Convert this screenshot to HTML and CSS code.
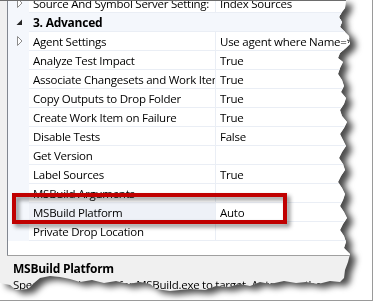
FILE: index.html
```html
<!DOCTYPE html>
<html>
<head>
<meta charset="utf-8">
<link rel="stylesheet" href="styles.css">
</head>
<body>
<div class="canvas">
  <div class="shot">
    <div class="paper">
      <div class="window">
        <div class="grid">
          <div class="row first">
            <div class="gutter"><svg class="arrow" width="6" height="10" viewBox="0 0 6 10"><polygon points="0.5,0.5 5,5 0.5,9.5" fill="#fff" stroke="#8c8c8c"/></svg></div>
            <div class="name">Source And Symbol Server Setting:</div>
            <div class="value">Index Sources</div>
          </div>
          <div class="row cat">
            <div class="gutter"><svg class="arrow" width="7" height="7" viewBox="0 0 7 7"><polygon points="6,0.5 6,6 0.5,6" fill="#262626"/></svg></div>
            <div class="name">3. Advanced</div>
          </div>
          <div class="row">
            <div class="gutter"><svg class="arrow" width="6" height="10" viewBox="0 0 6 10"><polygon points="0.5,0.5 5,5 0.5,9.5" fill="#fff" stroke="#8c8c8c"/></svg></div>
            <div class="name">Agent Settings</div>
            <div class="value">Use agent where Name=*</div>
          </div>
          <div class="row"><div class="gutter"></div><div class="name">Analyze Test Impact</div><div class="value">True</div></div>
          <div class="row"><div class="gutter"></div><div class="name">Associate Changesets and Work Items</div><div class="value">True</div></div>
          <div class="row"><div class="gutter"></div><div class="name">Copy Outputs to Drop Folder</div><div class="value">True</div></div>
          <div class="row"><div class="gutter"></div><div class="name">Create Work Item on Failure</div><div class="value">True</div></div>
          <div class="row"><div class="gutter"></div><div class="name">Disable Tests</div><div class="value">False</div></div>
          <div class="row"><div class="gutter"></div><div class="name">Get Version</div><div class="value"></div></div>
          <div class="row"><div class="gutter"></div><div class="name">Label Sources</div><div class="value">True</div></div>
          <div class="row"><div class="gutter"></div><div class="name">MSBuild Arguments</div><div class="value"></div></div>
          <div class="row"><div class="gutter"></div><div class="name selected">MSBuild Platform</div><div class="value">Auto</div></div>
          <div class="row"><div class="gutter"></div><div class="name">Private Drop Location</div><div class="value"></div></div>
          <div class="filler"></div>
        </div>
        <div class="desc">
          <div class="desc-title">MSBuild Platform</div>
          <div class="desc-text">Specify the platform for MSBuild.exe to target. Auto uses the</div>
        </div>
      </div>
    </div>
  </div>
  <div class="highlight"></div>
</div>
</body>
</html>
```
FILE: styles.css
```css
* { box-sizing: border-box; }
html, body { margin: 0; padding: 0; background: #fff; }
body {
  font-family: "Open Sans", "Noto Sans", sans-serif;
  font-size: 11.5px;
  letter-spacing: -0.25px;
  color: #000;
  width: 376px;
  height: 305px;
  overflow: hidden;
}
.canvas {
  position: relative;
  width: 373px;
  height: 301px;
  border-right: 1px solid #9a9a9a;
  border-bottom: 1px solid #9a9a9a;
  background: #fff;
  overflow: hidden;
}
.shot {
  width: 352px;
  height: 298px;
  filter: drop-shadow(6px 4px 3px rgba(0,0,0,0.7));
}
.paper {
  width: 352px;
  height: 298px;
  background: #f0f0f0;
  border-top: 1px solid #6d6d6d;
  overflow: hidden;
  clip-path: polygon(0 0, 346px 0, 345px 8px, 342px 12px, 339px 17px, 342px 22px, 340px 27px, 344px 31px, 349px 36px, 350px 44px, 346px 48px, 340px 53px, 338px 58px, 343px 62px, 340px 68px, 338px 74px, 342px 80px, 344px 86px, 341px 92px, 346px 98px, 344px 104px, 340px 110px, 342px 116px, 347px 122px, 344px 128px, 340px 134px, 343px 140px, 346px 146px, 342px 152px, 339px 158px, 343px 164px, 345px 170px, 341px 176px, 338px 182px, 342px 188px, 345px 194px, 343px 200px, 340px 206px, 344px 212px, 347px 218px, 343px 224px, 340px 230px, 344px 236px, 346px 242px, 344px 248px, 350px 254px, 348px 262px, 345px 270px, 344px 278px, 340px 282px, 330px 281px, 318px 284px, 306px 282px, 296px 283px, 284px 281px, 270px 284px, 260px 282px, 250px 286px, 240px 284px, 228px 287px, 216px 286px, 205px 290px, 190px 289px, 170px 291px, 156px 289px, 150px 284px, 140px 282px, 128px 284px, 116px 281px, 104px 283px, 92px 280px, 80px 282px, 70px 279px, 60px 277px, 50px 276px, 40px 278px, 34px 283px, 28px 289px, 16px 290px, 10px 285px, 0 283px);
}
.window {
  padding-left: 7px;
  background: #f0f0f0;
  height: 100%;
}
.grid {
  background: #fff;
  border-left: 1px solid #828790;
  height: 254px;
  overflow: hidden;
}
.row {
  display: flex;
  height: 19px;
  line-height: 19px;
  white-space: nowrap;
}
.row.first { margin-top: -7px; }
.gutter {
  width: 21px;
  flex: none;
  background: #f4f7fc;
  position: relative;
}
.arrow { position: absolute; left: 9px; top: 4px; }
.cat .arrow { left: 8px; top: 6px; }
.name {
  width: 187px;
  flex: none;
  padding-left: 4px;
  border-right: 1px solid #eaeef5;
  border-bottom: 1px solid #eaeef5;
  overflow: hidden;
  text-overflow: clip;
}
.name.selected { background: #eef1f7; }
.value {
  flex: 1;
  padding-left: 4px;
  border-bottom: 1px solid #eaeef5;
  overflow: hidden;
}
.cat { background: #f4f7fc; }
.cat .name {
  flex: 1;
  border-right: none;
  border-bottom: 1px solid #eaeef5;
  font-weight: 700;
  font-size: 12px;
}
.filler { height: 14px; }
.desc {
  border-top: 1px solid #a0a0a0;
  padding: 5px 0 0 6px;
  height: 60px;
}
.desc-title { font-weight: 700; font-size: 12px; line-height: 16px; }
.desc-text { line-height: 16px; white-space: nowrap; }
.highlight {
  position: absolute;
  left: 12px;
  top: 193px;
  width: 275px;
  height: 31px;
  border: 4px solid #c00000;
  filter: drop-shadow(3px 3px 2px rgba(0,0,0,0.45));
}
```
